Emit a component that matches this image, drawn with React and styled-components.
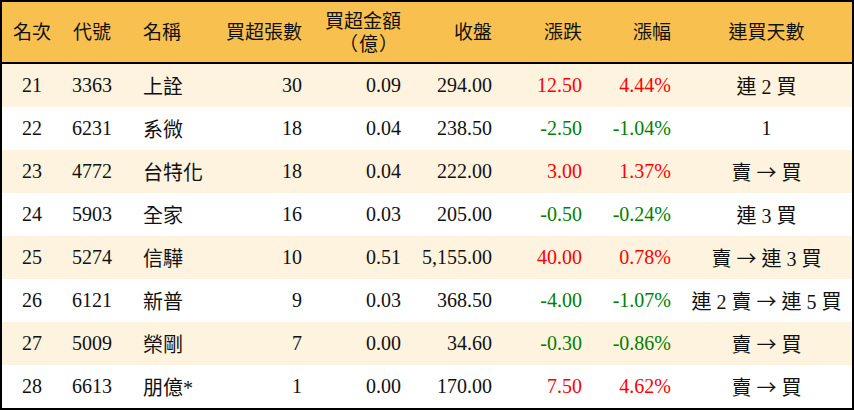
import styled, { createGlobalStyle } from 'styled-components'


const GlobalStyle = createGlobalStyle`
    body {
        margin: 0;
        background: #FFFFFF;
    }
`

const COLUMNS = '60px 60px 100px 90px 99px 91px 90px 89px 171px'

const StyledTable = styled.div`
    box-sizing: border-box;
    width: 854px;
    height: 410px;
    border: 2px solid #000000;

    font-family: "Liberation Serif", "Noto Sans CJK TC", serif;
    color: #111111;
`

const StyledHeader = styled.div`
    display: grid;
    grid-template-columns: ${ COLUMNS };
    height: 60px;
    border-bottom: 2px solid #000000;

    background: #F8C14F;
    font-size: 19px;
    line-height: 21px;
`

const StyledRow = styled.div`
    display: grid;
    grid-template-columns: ${ COLUMNS };
    height: 43px;

    background: ${ ({ $striped }) => $striped ? '#FDF3DE' : '#FFFFFF' };
    font-size: 20px;
`

const StyledCell = styled.div`
    display: flex;
    flex-direction: column;
    justify-content: center;
    padding: ${ ({ $align }) => $align === 'right' ? '0 10px 0 0' : $align === 'left' ? '0 0 0 21px' : '0' };

    text-align: ${ ({ $align }) => $align };
    white-space: nowrap;
    color: ${ ({ $tone }) => $tone === 'up' ? '#FF0000' : $tone === 'down' ? '#008000' : 'inherit' };
`

// full-width glyphs (parentheses, arrow) come from the CJK face
const StyledWide = styled.span`
    font-family: "Noto Sans CJK TC", sans-serif;
`

const StyledUnit = styled(StyledWide)`
    padding-right: 2px;
    letter-spacing: 1px;
`


const headers = [
    { label: '名次', align: 'center' },
    { label: '代號', align: 'center' },
    { label: '名稱', align: 'left' },
    { label: '買超張數', align: 'right' },
    { label: '買超金額', unit: '（億）', align: 'right' },
    { label: '收盤', align: 'right' },
    { label: '漲跌', align: 'right' },
    { label: '漲幅', align: 'right' },
    { label: '連買天數', align: 'center' },
]

const rows = [
    [ '21', '3363', '上詮', '30', '0.09', '294.00', '12.50', '4.44%', '連 2 買' ],
    [ '22', '6231', '系微', '18', '0.04', '238.50', '-2.50', '-1.04%', '1' ],
    [ '23', '4772', '台特化', '18', '0.04', '222.00', '3.00', '1.37%', '賣 → 買' ],
    [ '24', '5903', '全家', '16', '0.03', '205.00', '-0.50', '-0.24%', '連 3 買' ],
    [ '25', '5274', '信驊', '10', '0.51', '5,155.00', '40.00', '0.78%', '賣 → 連 3 買' ],
    [ '26', '6121', '新普', '9', '0.03', '368.50', '-4.00', '-1.07%', '連 2 賣 → 連 5 買' ],
    [ '27', '5009', '榮剛', '7', '0.00', '34.60', '-0.30', '-0.86%', '賣 → 買' ],
    [ '28', '6613', '朋億*', '1', '0.00', '170.00', '7.50', '4.62%', '賣 → 買' ],
]

const toneOf = value => value.startsWith( '-' ) ? 'down' : 'up'

/**
 * Split a streak text so the arrow is drawn full width
 *
 * @param {string} text Streak description
 */
const renderStreak = text => text.split( '→' ).flatMap( ( part, i ) => (
    i === 0 ? [ part ] : [ <StyledWide key={ i }>→</StyledWide>, part ]
) )


const App = () => (
    <>
        <GlobalStyle />
        <StyledTable>
            <StyledHeader>
                { headers.map( ({ label, unit, align }, i ) => (
                    <StyledCell key={ i } $align={ align }>
                        <span>{ label }</span>
                        { unit && <StyledUnit>{ unit }</StyledUnit> }
                    </StyledCell>
                ) ) }
            </StyledHeader>
            { rows.map( ( row, r ) => (
                <StyledRow key={ row[0] } $striped={ r % 2 === 0 }>
                    { row.map( ( value, i ) => (
                        <StyledCell
                            key={ i }
                            $align={ headers[i].align }
                            $tone={ i === 6 || i === 7 ? toneOf( value ) : undefined }
                        >
                            { i === 8 ? <span>{ renderStreak( value ) }</span> : value }
                        </StyledCell>
                    ) ) }
                </StyledRow>
            ) ) }
        </StyledTable>
    </>
)


export default App
